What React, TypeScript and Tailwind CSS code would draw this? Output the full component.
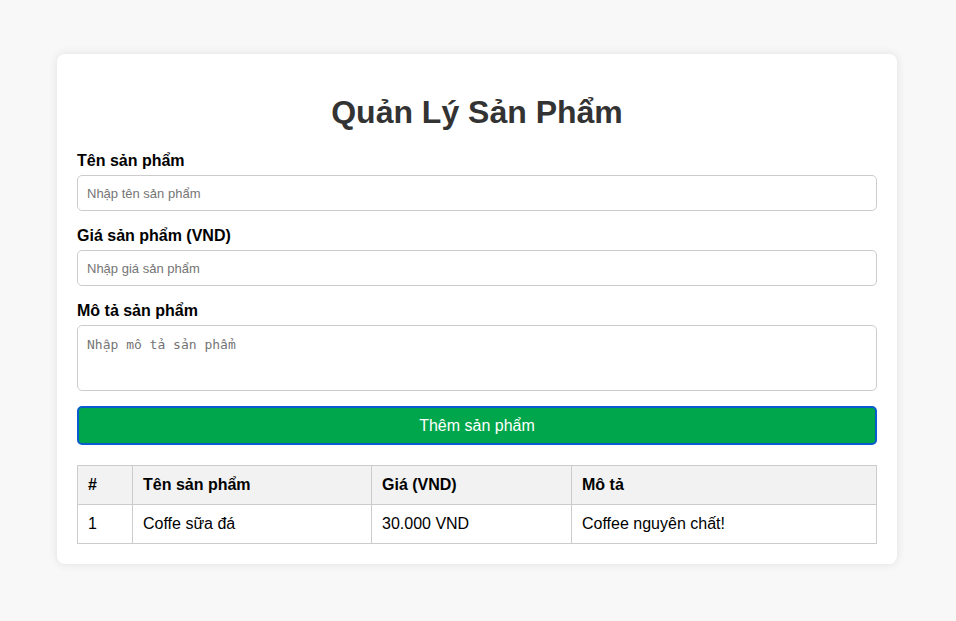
import React from 'react';

interface Product {
  id: number;
  name: string;
  price: string;
  desc: string;
}

const products: Product[] = [{ id: 1, name: 'Coffe sữa đá', price: '30.000 VND', desc: 'Coffee nguyên chất!' }];

const App: React.FC = () => {
  return (
    <div className="min-h-[621px] bg-[#f8f8f8] pt-[54px] font-['Liberation_Sans',Arial,sans-serif]">
      <div className="ml-[57px] w-[840px] rounded-lg bg-white p-5 shadow-[0_0_10px_rgba(0,0,0,0.1)]">
        <h1 className="mt-[20px] mb-[21px] text-center text-[32px] font-bold leading-[37px] text-[#333]">Quản Lý Sản Phẩm</h1>

        <div className="mb-[16px]">
          <label className="mb-[5px] block text-[16px] font-bold leading-[18px] text-black">Tên sản phẩm</label>
          <input
            type="text"
            placeholder="Nhập tên sản phẩm"
            className="block h-[36px] w-full rounded-[5px] border border-[#ccc] px-[9px] text-[13px] placeholder:text-[#757575] outline-none"
          />
        </div>

        <div className="mb-[16px]">
          <label className="mb-[5px] block text-[16px] font-bold leading-[18px] text-black">Giá sản phẩm (VND)</label>
          <input
            type="text"
            placeholder="Nhập giá sản phẩm"
            className="block h-[36px] w-full rounded-[5px] border border-[#ccc] px-[9px] text-[13px] placeholder:text-[#757575] outline-none"
          />
        </div>

        <div className="mb-[15px]">
          <label className="mb-[5px] block text-[16px] font-bold leading-[18px] text-black">Mô tả sản phẩm</label>
          <textarea
            placeholder="Nhập mô tả sản phẩm"
            className="block h-[66px] w-full resize-none rounded-[5px] border border-[#ccc] px-[9px] pt-[11px] pb-[9px] font-['DejaVu_Sans_Mono',monospace] text-[13px] leading-[16px] placeholder:text-[#757575] outline-none"
          />
        </div>

        <button className="block h-[39px] w-full rounded-[5px] border-2 border-[#0a5bd0] bg-[#00a64b] text-[16px] text-white">
          Thêm sản phẩm
        </button>

        <table className="mt-[20px] w-full border-collapse text-[16px] text-black">
          <thead>
            <tr className="bg-[#f2f2f2]">
              <th className="h-[39px] w-[55px] border border-[#ccc] px-[10px] text-left font-bold">#</th>
              <th className="w-[239px] border border-[#ccc] px-[10px] text-left font-bold">Tên sản phẩm</th>
              <th className="w-[200px] border border-[#ccc] px-[10px] text-left font-bold">Giá (VND)</th>
              <th className="border border-[#ccc] px-[10px] text-left font-bold">Mô tả</th>
            </tr>
          </thead>
          <tbody>
            {products.map((p) => (
              <tr key={p.id}>
                <td className="h-[39px] border border-[#ccc] px-[10px]">{p.id}</td>
                <td className="border border-[#ccc] px-[10px]">{p.name}</td>
                <td className="border border-[#ccc] px-[10px]">{p.price}</td>
                <td className="border border-[#ccc] px-[10px]">{p.desc}</td>
              </tr>
            ))}
          </tbody>
        </table>
      </div>
    </div>
  );
};

export default App;
